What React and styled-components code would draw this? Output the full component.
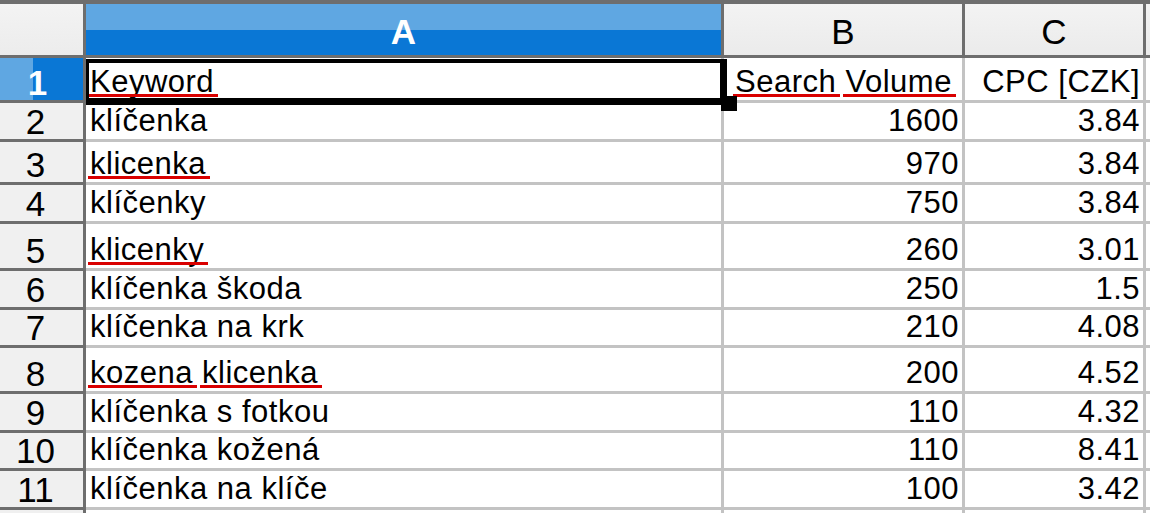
import React from "react";
import styled, { createGlobalStyle } from "styled-components";

const Global = createGlobalStyle`
  html, body { margin: 0; padding: 0; background: #fff; overflow: hidden; }
  body { width: 1150px; height: 513px; }
`;

const DARK = "#6e6e6e";
const LIGHT = "#c3c3c3";
const LIGHT_BLUE = "#5fa7e2";
const BLUE = "#0a77d5";

const Sheet = styled.div`
  width: 1150px;
  height: 513px;
  overflow: hidden;
  border-top: 4px solid ${DARK};
  box-sizing: border-box;
  display: grid;
  grid-template-columns: 86px 638px 241px 181px 4px;
  font-family: "Liberation Sans", Arial, sans-serif;
  color: #000;
`;

const Corner = styled.div`
  height: 54px;
  box-sizing: border-box;
  background: linear-gradient(#f3f3f3, #ececec);
  border-right: 3px solid ${DARK};
  border-bottom: 3px solid ${DARK};
`;

const ColHead = styled.div`
  height: 54px;
  box-sizing: border-box;
  display: flex;
  align-items: flex-end;
  justify-content: center;
  padding-bottom: 6px;
  font-size: 35px;
  line-height: 35px;
  font-weight: ${(p) => (p.$active ? 700 : 400)};
  color: ${(p) => (p.$active ? "#fff" : "#000")};
  background: ${(p) =>
    p.$active
      ? `linear-gradient(${LIGHT_BLUE} 26px, ${BLUE} 26px)`
      : "linear-gradient(#f3f3f3, #ebebeb)"};
  border-right: ${(p) => (p.$last ? 0 : 3)}px solid ${DARK};
  border-bottom: 3px solid ${DARK};
`;

const RowHead = styled.div`
  height: ${(p) => p.$h}px;
  box-sizing: border-box;
  display: flex;
  align-items: flex-end;
  justify-content: center;
  padding-right: ${(p) => (p.$active ? 8 : 12)}px;
  font-size: 35px;
  line-height: 34px;
  font-weight: ${(p) => (p.$active ? 700 : 400)};
  color: ${(p) => (p.$active ? "#fff" : "#000")};
  background: ${(p) =>
    p.$active
      ? `linear-gradient(to right, ${LIGHT_BLUE} 33px, ${BLUE} 33px)`
      : "#f0f0f0"};
  border-right: 3px solid ${DARK};
  border-bottom: 3px solid ${DARK};
`;

const Cell = styled.div`
  position: relative;
  height: ${(p) => p.$h}px;
  box-sizing: border-box;
  display: flex;
  align-items: flex-end;
  justify-content: ${(p) =>
    p.$align === "right" ? "flex-end" : p.$align === "center" ? "center" : "flex-start"};
  padding: 0 3px 3px 4px;
  font-size: 31px;
  line-height: 30px;
  letter-spacing: 0.5px;
  white-space: nowrap;
  background: #fff;
  border-right: ${(p) => (p.$last ? 0 : 3)}px solid ${LIGHT};
  border-bottom: 3px solid ${LIGHT};
`;

const Word = styled.span`
  position: relative;
  &::after {
    content: "";
    position: absolute;
    left: -2px;
    right: -4px;
    bottom: 2px;
    height: 3px;
    background: #d90000;
  }
`;

const Selection = styled.div`
  position: absolute;
  z-index: 2;
  left: 0;
  top: 1px;
  right: -6px;
  bottom: -5px;
  border-style: solid;
  border-color: #000;
  border-width: 4px 7px 7px 3px;
  pointer-events: none;
`;

const Handle = styled.div`
  position: absolute;
  right: -17px;
  bottom: -13px;
  width: 16px;
  height: 15px;
  background: #000;
`;

const rows = [
  { n: 1, h: 45, kw: [{ w: "Keyword", bad: true }], vol: [{ w: "Search", bad: true }, " ", { w: "Volume", bad: true }], cpc: "CPC [CZK]", head: true },
  { n: 2, h: 39, kw: ["klíčenka"], vol: "1600", cpc: "3.84" },
  { n: 3, h: 43, kw: [{ w: "klicenka", bad: true }], vol: "970", cpc: "3.84" },
  { n: 4, h: 39, kw: ["klíčenky"], vol: "750", cpc: "3.84" },
  { n: 5, h: 47, kw: [{ w: "klicenky", bad: true }], vol: "260", cpc: "3.01" },
  { n: 6, h: 39, kw: ["klíčenka škoda"], vol: "250", cpc: "1.5" },
  { n: 7, h: 38, kw: ["klíčenka na krk"], vol: "210", cpc: "4.08" },
  { n: 8, h: 46, kw: [{ w: "kozena", bad: true }, " ", { w: "klicenka", bad: true }], vol: "200", cpc: "4.52" },
  { n: 9, h: 39, kw: ["klíčenka s fotkou"], vol: "110", cpc: "4.32" },
  { n: 10, h: 38, kw: ["klíčenka kožená"], vol: "110", cpc: "8.41" },
  { n: 11, h: 39, kw: ["klíčenka na klíče"], vol: "100", cpc: "3.42" },
  { n: 12, h: 39, kw: [""], vol: "", cpc: "", blank: true },
];

function Text({ parts }) {
  if (typeof parts === "string") return parts;
  return parts.map((p, i) =>
    typeof p === "string" ? (
      <React.Fragment key={i}>{p}</React.Fragment>
    ) : p.bad ? (
      <Word key={i}>{p.w}</Word>
    ) : (
      <React.Fragment key={i}>{p.w}</React.Fragment>
    )
  );
}

export default function App() {
  return (
    <>
      <Global />
      <Sheet>
        <Corner />
        <ColHead $active>A</ColHead>
        <ColHead>B</ColHead>
        <ColHead>C</ColHead>
        <ColHead $last />
        {rows.map((r) => (
          <React.Fragment key={r.n}>
            <RowHead $h={r.h} $active={r.n === 1}>{r.blank ? "" : r.n}</RowHead>
            <Cell $h={r.h}>
              <span>
                <Text parts={r.kw} />
              </span>
              {r.n === 1 && (
                <Selection>
                  <Handle />
                </Selection>
              )}
            </Cell>
            <Cell $h={r.h} $align={r.head ? "center" : "right"}>
              <span>
                <Text parts={r.vol} />
              </span>
            </Cell>
            <Cell $h={r.h} $align="right">
              <span>{r.cpc}</span>
            </Cell>
            <Cell $h={r.h} $last />
          </React.Fragment>
        ))}
      </Sheet>
    </>
  );
}
